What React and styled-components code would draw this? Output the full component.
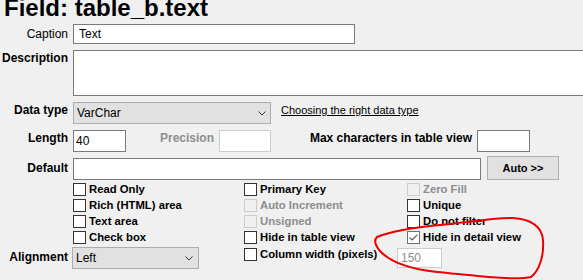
import React from "react";
import styled, { createGlobalStyle } from "styled-components";

const Global = createGlobalStyle`
  html, body { margin: 0; padding: 0; background: #f0f0f0; overflow: hidden; }
  body { font-family: "Liberation Sans", Arial, sans-serif; color: #000; }
  * { box-sizing: border-box; }
`;

const Page = styled.div`
  position: relative;
  width: 583px;
  height: 280px;
  overflow: hidden;
  background: #f0f0f0;
`;

const Title = styled.h1`
  margin: -4px 0 0 4px;
  font-size: 24px;
  line-height: 24px;
  font-weight: bold;
  white-space: nowrap;
`;

const Form = styled.div`
  display: flex;
  flex-direction: column;
  margin-top: 4px;
`;

const Row = styled.div`
  display: flex;
  align-items: flex-start;
  margin-top: ${(p) => p.$mt || 0}px;
`;

const Label = styled.div`
  flex: none;
  width: ${(p) => p.$w || 68}px;
  margin-right: 5px;
  padding-top: ${(p) => p.$pt || 0}px;
  text-align: right;
  font-size: 12px;
  line-height: 14px;
  font-weight: ${(p) => (p.$normal ? "normal" : "bold")};
  color: ${(p) => (p.$disabled ? "#8d8d8d" : "#000")};
  white-space: nowrap;
`;

const TextBox = styled.input`
  flex: none;
  display: block;
  width: ${(p) => p.$w}px;
  height: ${(p) => p.$h || 22}px;
  margin: ${(p) => p.$mt || 0}px 0 0 0;
  padding: 0 0 0 ${(p) => p.$pl ?? 3}px;
  border: 1px solid ${(p) => (p.disabled ? "#cccccc" : "#7a7a7a")};
  background: #fff;
  font-family: "Liberation Sans", Arial, sans-serif;
  font-size: 12px;
  color: ${(p) => (p.disabled ? "#8d8d8d" : "#000")};
  outline: none;
  border-radius: 0;
`;

const TextArea = styled.textarea`
  flex: none;
  display: block;
  width: 530px;
  height: 46px;
  margin: 0;
  border: 1px solid #7a7a7a;
  background: #fff;
  resize: none;
  outline: none;
  border-radius: 0;
`;

const Select = styled.div`
  flex: none;
  display: flex;
  align-items: center;
  justify-content: space-between;
  width: ${(p) => p.$w}px;
  height: 22px;
  margin-left: ${(p) => p.$ml || 0}px;
  padding: 0 ${(p) => p.$pr || 4}px 0 3px;
  background: #e1e1e1;
  border: 1px solid #adadad;
  font-size: 12px;
`;

const LinkText = styled.a`
  margin: 2px 0 0 10px;
  font-size: 11px;
  line-height: 13px;
  color: #000;
  text-decoration: underline;
  white-space: nowrap;
  cursor: pointer;
`;

const Button = styled.button`
  flex: none;
  width: 72px;
  height: 24px;
  margin-left: 6px;
  padding: 0;
  background: #e1e1e1;
  border: 1px solid #adadad;
  border-radius: 0;
  font-family: "Liberation Sans", Arial, sans-serif;
  font-size: 11px;
  font-weight: bold;
  color: #000;
`;

const CheckGrid = styled.div`
  display: grid;
  grid-template-columns: 171px 163px 1fr;
  grid-auto-rows: 16px;
  margin: 3px 0 0 73px;
`;

const CheckItem = styled.label`
  display: flex;
  align-items: flex-start;
  gap: 3px;
  margin-top: ${(p) => p.$mt || 0}px;
  margin-left: ${(p) => p.$ml || 0}px;
`;

const Box = styled.span`
  position: relative;
  flex: none;
  width: 13px;
  height: 13px;
  border: 1px solid
    ${(p) => (p.$disabled ? "#cccccc" : p.$checked ? "#707070" : "#333333")};
  background: ${(p) => (p.$disabled ? "transparent" : "#fff")};
`;

const CheckText = styled.span`
  width: ${(p) => (p.$w ? `${p.$w}px` : "auto")};
  font-size: 11.3px;
  line-height: 13px;
  font-weight: bold;
  white-space: nowrap;
  color: ${(p) => (p.$disabled ? "#8d8d8d" : "#000")};
`;

const Overlay = styled.svg`
  position: absolute;
  left: 0;
  top: 0;
  pointer-events: none;
`;

const Chevron = () => (
  <svg width="8" height="5" viewBox="0 0 8 5">
    <path d="M0.5 0.5 L4 4 L7.5 0.5" fill="none" stroke="#333" strokeWidth="1" />
  </svg>
);

const Check = ({ label, disabled, checked, w, ml, mt }) => (
  <CheckItem $ml={ml} $mt={mt}>
    <Box $disabled={disabled} $checked={checked}>
      {checked && (
        <svg width="11" height="11" viewBox="0 0 11 11" style={{ position: "absolute", left: 0, top: 0 }}>
          <path d="M1.8 5.6 L4.2 8 L9.3 2.6" fill="none" stroke="#555" strokeWidth="1.2" />
        </svg>
      )}
    </Box>
    <CheckText $disabled={disabled} $w={w}>{label}</CheckText>
  </CheckItem>
);

export default function App() {
  return (
    <Page>
      <Global />
      <Title>Field: table_b.text</Title>
      <Form>
        <Row>
          <Label $pt={3} $normal>Caption</Label>
          <TextBox $w={282} $h={20} $pl={5} defaultValue="Text" />
        </Row>
        <Row $mt={6}>
          <Label $pt={1}>Description</Label>
          <TextArea />
        </Row>
        <Row $mt={6}>
          <Label $pt={1}>Data type</Label>
          <Select $w={198}>
            <span>VarChar</span>
            <Chevron />
          </Select>
          <LinkText>Choosing the right data type</LinkText>
        </Row>
        <Row $mt={6}>
          <Label $pt={1}>Length</Label>
          <TextBox $w={53} $pl={2} defaultValue="40" />
          <Label $pt={1} $w={88} $disabled>Precision</Label>
          <TextBox $w={52} disabled />
          <Label $pt={1} $w={201}>Max characters in table view</Label>
          <TextBox $w={53} />
        </Row>
        <Row $mt={4}>
          <Label $pt={5}>Default</Label>
          <TextBox $w={408} $mt={2} />
          <Button>Auto &gt;&gt;</Button>
        </Row>
        <CheckGrid>
          <Check label="Read Only" />
          <Check label="Primary Key" />
          <Check label="Zero Fill" disabled />
          <Check label="Rich (HTML) area" />
          <Check label="Auto Increment" disabled />
          <Check label="Unique" />
          <Check label="Text area" />
          <Check label="Unsigned" disabled />
          <Check label="Do not filter" />
          <Check label="Check box" />
          <Check label="Hide in table view" />
          <Check label="Hide in detail view" checked />
        </CheckGrid>
        <Row>
          <Label $pt={3}>Alignment</Label>
          <Select $w={127} $ml={-1} $pr={5}>
            <span>Left</span>
            <Chevron />
          </Select>
          <CheckItem $ml={45} $mt={1}>
            <Box />
            <CheckText $w={137}>Column width (pixels)</CheckText>
          </CheckItem>
          <TextBox $w={45} $h={20} $mt={1} disabled defaultValue="150" />
        </Row>
      </Form>
      <Overlay width="583" height="280" viewBox="0 0 583 280">
        <path
          d="M377 237 C392 231, 418 227, 440 225 C465 223, 490 218, 513 218 C530 219, 542 226, 543 240 C544 255, 540 270, 531 277 C515 281, 470 275, 437 272 C410 269, 390 262, 380 251 C375 245, 374 240, 377 237"
          fill="none"
          stroke="#ee0000"
          strokeWidth="2"
          strokeLinecap="round"
        />
      </Overlay>
    </Page>
  );
}
